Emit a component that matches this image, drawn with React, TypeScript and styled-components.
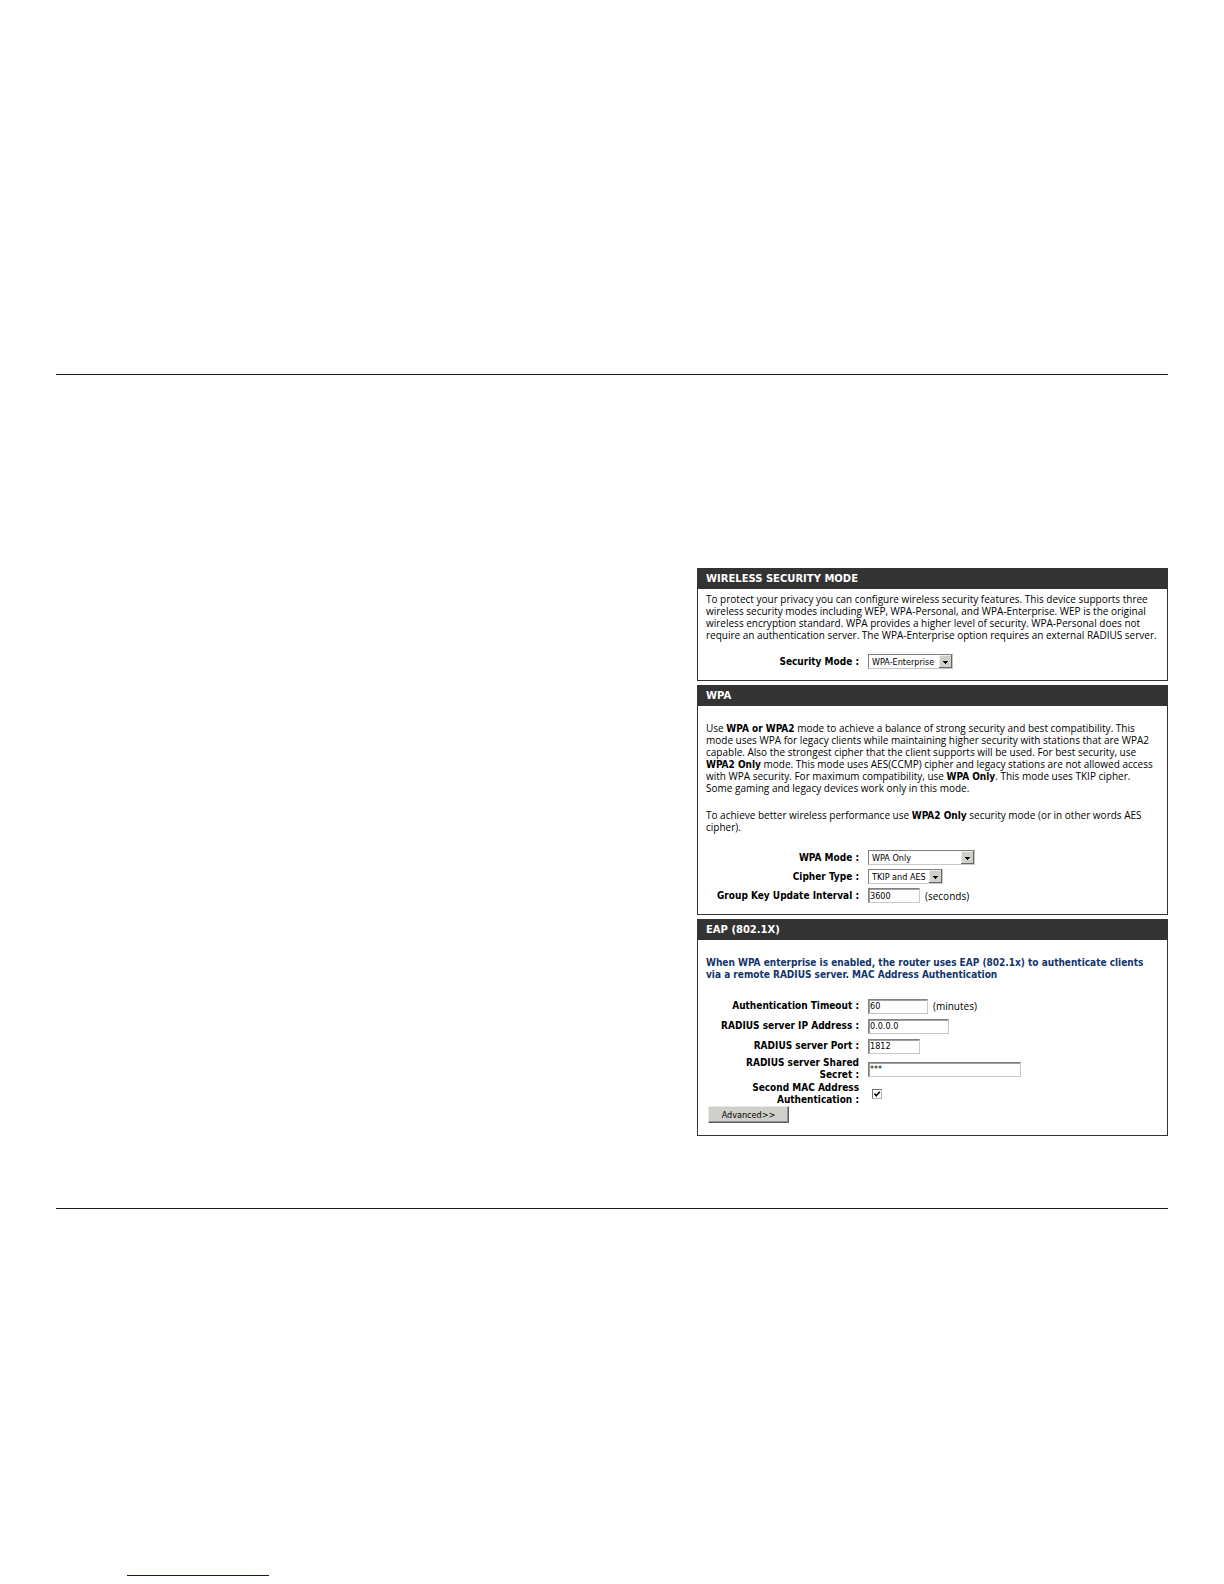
import React from "react";
import styled, { createGlobalStyle } from "styled-components";

const GlobalStyle = createGlobalStyle`
  * { box-sizing: border-box; }
  body {
    margin: 0;
    background: #fff;
    color: #000;
    font: 10px/12px "Open Sans", "Noto Sans", sans-serif;
  }
  b {
    font-family: "DejaVu Sans Condensed", sans-serif;
    line-height: 1;
  }
`;

const Page = styled.div`
  padding: 374px 56px 8px;
`;

const Content = styled.main`
  display: flex;
  justify-content: flex-end;
  padding: 193px 0 72px;
  border-top: 1px solid #1a1a1a;
  border-bottom: 1px solid #1a1a1a;
`;

const Panels = styled.form`
  display: flex;
  flex-direction: column;
  gap: 4px;
  width: 100%;
  max-width: 471px;
`;

const Panel = styled.section`
  border: 1px solid #333;
`;

const PanelTitle = styled.h2`
  margin: 0;
  padding: 0 8px;
  background: #333;
  color: #fff;
  font: bold 10px/20px "DejaVu Sans", sans-serif;
`;

const PanelBody = styled.div<{ $top: number; $bottom: number }>`
  padding: ${(p) => p.$top}px 8px ${(p) => p.$bottom}px;
`;

const Text = styled.p<{ $gap: number }>`
  margin: 0 0 ${(p) => p.$gap}px;
`;

const Notice = styled(Text)`
  color: #12356b;
  font-family: "DejaVu Sans Condensed", sans-serif;
  font-weight: bold;
`;

const Row = styled.div<{ $height: number }>`
  display: grid;
  grid-template-columns: 153px 1fr;
  column-gap: 9px;
  align-items: center;
  min-height: ${(p) => p.$height}px;
`;

const Label = styled.label`
  font-family: "DejaVu Sans Condensed", sans-serif;
  font-weight: bold;
  text-align: right;
`;

const Field = styled.div`
  display: flex;
  align-items: center;
  gap: 5px;
`;

const SelectBox = styled.span<{ $width: number }>`
  display: flex;
  position: relative;
  width: ${(p) => p.$width}px;
`;

const Select = styled.select`
  appearance: none;
  width: 100%;
  height: 15px;
  margin: 0;
  padding: 0 14px 0 3px;
  border: 1px solid;
  border-color: #808080 #c8c8c8 #c8c8c8 #808080;
  border-radius: 0;
  background: #fff;
  color: #000;
  font: 9px/12px "DejaVu Sans Condensed", sans-serif;
`;

const Arrow = styled.svg`
  position: absolute;
  top: 1px;
  right: 1px;
  pointer-events: none;
`;

const Input = styled.input<{ $width: number }>`
  width: ${(p) => p.$width}px;
  height: 15px;
  padding: 0 1px;
  border: 1px solid;
  border-color: #808080 #c8c8c8 #c8c8c8 #808080;
  border-radius: 0;
  background: #fff;
  color: #000;
  font: 9px/12px "DejaVu Sans Condensed", sans-serif;
  box-shadow: inset 1px 1px 0 #a0a0a0;
`;

const CheckBox = styled.span`
  display: grid;
  margin-left: 4px;
  & > * { grid-area: 1 / 1; }
  svg { pointer-events: none; }
`;

const Check = styled.input`
  appearance: none;
  width: 10px;
  height: 10px;
  margin: 0;
  border: 1px solid;
  border-color: #707070 #b0b0b0 #b0b0b0 #707070;
  background: #fff;
  &:not(:checked) + svg { display: none; }
`;

const Button = styled.button`
  display: block;
  width: 81px;
  height: 17px;
  margin: 0 0 0 2px;
  padding: 0;
  border: 1px solid;
  border-color: #e8e8e4 #606060 #606060 #e8e8e4;
  border-radius: 0;
  background: #d0cfc9;
  color: #000;
  font: 9px/12px "DejaVu Sans Condensed", sans-serif;
  box-shadow: inset -1px -1px 0 #909090;
`;

const FooterLink = styled.a`
  display: block;
  width: 142px;
  height: 367px;
  margin-left: 71px;
  border-bottom: 1px solid #10107c;
`;

function DropDown(props: { id: string; width: number; value: string; options: string[] }) {
  return (
    <SelectBox $width={props.width}>
      <Select id={props.id} defaultValue={props.value}>
        {props.options.map((o) => (
          <option key={o}>{o}</option>
        ))}
      </Select>
      <Arrow width="13" height="13" viewBox="0 0 13 13" shapeRendering="crispEdges" aria-hidden="true">
        <rect width="13" height="13" fill="#d0cfc9" />
        <path d="M0 12.5H13M12.5 0V13" stroke="#666" />
        <path d="M0 .5H12M.5 0V12" stroke="#eee" />
        <path d="M4 6h5v1H8v1H7v1H6V8H5V7H4z" fill="#000" />
      </Arrow>
    </SelectBox>
  );
}

export default function App() {
  return (
    <>
      <GlobalStyle />
      <Page>
        <Content>
          <Panels onSubmit={(e) => e.preventDefault()}>
            <Panel>
              <PanelTitle>WIRELESS SECURITY MODE</PanelTitle>
              <PanelBody $top={4} $bottom={9}>
                <Text $gap={11}>
                  To protect your privacy you can configure wireless security features. This device supports three<br />
                  wireless security modes including WEP, WPA-Personal, and WPA-Enterprise. WEP is the original<br />
                  wireless encryption standard. WPA provides a higher level of security. WPA-Personal does not<br />
                  require an authentication server. The WPA-Enterprise option requires an external RADIUS server.
                </Text>
                <Row $height={19}>
                  <Label htmlFor="security-mode">Security Mode :</Label>
                  <DropDown
                    id="security-mode"
                    width={85}
                    value="WPA-Enterprise"
                    options={["None", "WEP", "WPA-Personal", "WPA-Enterprise"]}
                  />
                </Row>
              </PanelBody>
            </Panel>

            <Panel>
              <PanelTitle>WPA</PanelTitle>
              <PanelBody $top={16} $bottom={9}>
                <Text $gap={15}>
                  Use <b>WPA or WPA2</b> mode to achieve a balance of strong security and best compatibility. This<br />
                  mode uses WPA for legacy clients while maintaining higher security with stations that are WPA2<br />
                  capable. Also the strongest cipher that the client supports will be used. For best security, use<br />
                  <b>WPA2 Only</b> mode. This mode uses AES(CCMP) cipher and legacy stations are not allowed access<br />
                  with WPA security. For maximum compatibility, use <b>WPA Only</b>. This mode uses TKIP cipher.<br />
                  Some gaming and legacy devices work only in this mode.
                </Text>
                <Text $gap={15}>
                  To achieve better wireless performance use <b>WPA2 Only</b> security mode (or in other words AES<br />
                  cipher).
                </Text>
                <Row $height={19}>
                  <Label htmlFor="wpa-mode">WPA Mode :</Label>
                  <DropDown
                    id="wpa-mode"
                    width={107}
                    value="WPA Only"
                    options={["Auto (WPA or WPA2)", "WPA2 Only", "WPA Only"]}
                  />
                </Row>
                <Row $height={19}>
                  <Label htmlFor="cipher">Cipher Type :</Label>
                  <DropDown id="cipher" width={75} value="TKIP and AES" options={["TKIP", "AES", "TKIP and AES"]} />
                </Row>
                <Row $height={19}>
                  <Label htmlFor="interval">Group Key Update Interval :</Label>
                  <Field>
                    <Input id="interval" $width={52} defaultValue="3600" />
                    <span>(seconds)</span>
                  </Field>
                </Row>
              </PanelBody>
            </Panel>

            <Panel>
              <PanelTitle>EAP (802.1X)</PanelTitle>
              <PanelBody $top={17} $bottom={12}>
                <Notice $gap={15}>
                  When WPA enterprise is enabled, the router uses EAP (802.1x) to authenticate clients<br />
                  via a remote RADIUS server. MAC Address Authentication
                </Notice>
                <Row $height={20}>
                  <Label htmlFor="timeout">Authentication Timeout :</Label>
                  <Field>
                    <Input id="timeout" $width={60} defaultValue="60" />
                    <span>(minutes)</span>
                  </Field>
                </Row>
                <Row $height={20}>
                  <Label htmlFor="radius-ip">RADIUS server IP Address :</Label>
                  <Input id="radius-ip" $width={81} defaultValue="0.0.0.0" />
                </Row>
                <Row $height={20}>
                  <Label htmlFor="radius-port">RADIUS server Port :</Label>
                  <Input id="radius-port" $width={52} defaultValue="1812" />
                </Row>
                <Row $height={26}>
                  <Label htmlFor="secret">
                    RADIUS server Shared<br />
                    Secret :
                  </Label>
                  <Input id="secret" $width={153} defaultValue="***" />
                </Row>
                <Row $height={24}>
                  <Label htmlFor="second-mac">
                    Second MAC Address<br />
                    Authentication :
                  </Label>
                  <Field>
                    <CheckBox>
                      <Check id="second-mac" type="checkbox" defaultChecked />
                      <svg width="10" height="10" viewBox="0 0 10 10" aria-hidden="true">
                        <path d="M2.5 4.5L4.2 6.7L7.7 2.8" fill="none" stroke="#000" strokeWidth="1.6" />
                      </svg>
                    </CheckBox>
                  </Field>
                </Row>
                <Button type="button">Advanced&gt;&gt;</Button>
              </PanelBody>
            </Panel>
          </Panels>
        </Content>
        <FooterLink href="#" aria-label="Footer" />
      </Page>
    </>
  );
}
